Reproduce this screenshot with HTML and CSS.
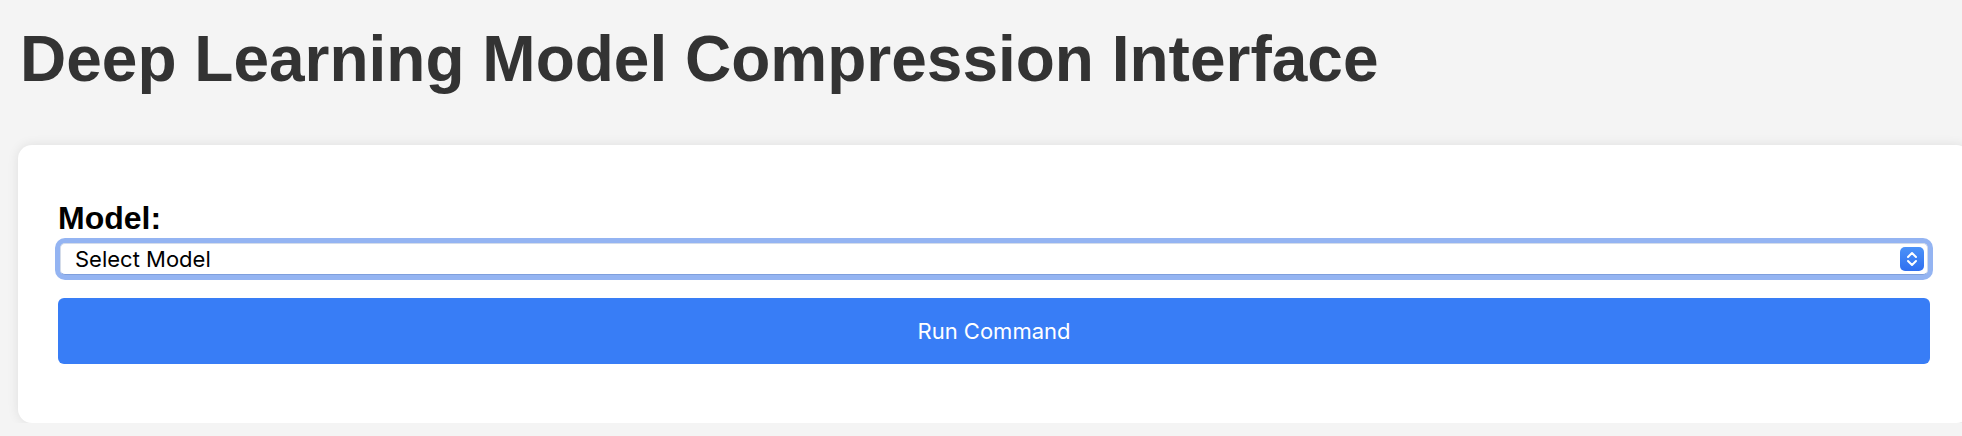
FILE: index.html
```html
<!DOCTYPE html>
<html lang="en">
<head>
<meta charset="utf-8">
<title>Deep Learning Model Compression Interface</title>
<link rel="stylesheet" href="styles.css">
</head>
<body>
  <h1 class="title">Deep Learning Model Compression Interface</h1>
  <div class="card">
    <form class="form">
      <label class="label" for="model">Model:</label>
      <div class="select-wrap">
        <select id="model" class="select">
          <option>Select Model</option>
        </select>
        <span class="select-arrow" aria-hidden="true">
          <svg width="24" height="24" viewBox="0 0 24 24">
            <defs>
              <linearGradient id="g" x1="0" y1="0" x2="0" y2="1">
                <stop offset="0" stop-color="#4b92f8"/>
                <stop offset="1" stop-color="#2f6ff0"/>
              </linearGradient>
            </defs>
            <rect x="0" y="0" width="24" height="24" rx="5" fill="url(#g)"/>
            <path d="M8 10 L12 6 L16 10" fill="none" stroke="#fff" stroke-width="2" stroke-linecap="round" stroke-linejoin="round"/>
            <path d="M8 14 L12 18 L16 14" fill="none" stroke="#fff" stroke-width="2" stroke-linecap="round" stroke-linejoin="round"/>
          </svg>
        </span>
      </div>
      <button type="button" class="button">Run Command</button>
    </form>
  </div>
</body>
</html>
```
FILE: styles.css
```css
html, body {
  overflow: hidden;
}
body {
  margin: 0;
  padding: 22px 0 0 18px;
  background: #f4f4f4;
  font-family: "Liberation Sans", Arial, sans-serif;
}
.title {
  margin: 0 0 0 2px;
  font-size: 64px;
  font-weight: bold;
  line-height: 74px;
  color: #333333;
}
.card {
  box-sizing: border-box;
  width: 1952px;
  margin-top: 49px;
  padding: 56px 40px 59px;
  background: #ffffff;
  border-radius: 14px;
  box-shadow: 0 0 12px rgba(0, 0, 0, 0.09);
}
.form {
  display: flex;
  flex-direction: column;
}
.label {
  display: block;
  font-size: 32px;
  font-weight: bold;
  line-height: 35px;
  color: #000000;
  margin-bottom: 7px;
}
.select-wrap {
  position: relative;
  margin: 0 2px;
}
.select {
  display: block;
  box-sizing: border-box;
  width: 100%;
  height: 32px;
  margin: 0;
  padding: 0 40px 0 14px;
  -webkit-appearance: none;
  appearance: none;
  background: #ffffff;
  border: 1px solid #d4dcea;
  border-bottom-color: #7f9fdc;
  border-radius: 5px;
  box-shadow: 0 0 0 5px #94b4f2;
  outline: none;
  font-family: Inter, "Noto Sans", sans-serif;
  font-size: 22px;
  color: #000000;
}
.select-arrow {
  position: absolute;
  right: 4px;
  top: 4px;
  width: 24px;
  height: 24px;
  line-height: 0;
}
.button {
  margin-top: 23px;
  height: 66px;
  border: none;
  border-radius: 6px;
  background: #387df6;
  color: #ffffff;
  font-family: Inter, "Noto Sans", sans-serif;
  font-size: 22px;
  cursor: pointer;
}
```
